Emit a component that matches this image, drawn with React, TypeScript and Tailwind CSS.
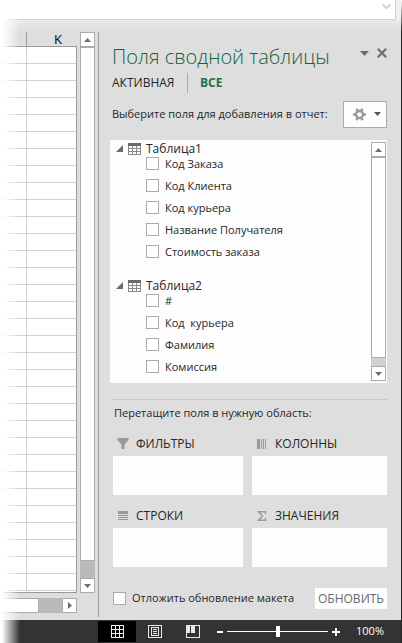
import { useState } from 'react';
import type { ReactNode } from 'react';

interface FieldTable {
  name: string;
  fields: string[];
}

interface Area {
  id: string;
  label: string;
  icon: ReactNode;
}

const tables: FieldTable[] = [
  {
    name: 'Таблица1',
    fields: ['Код Заказа', 'Код Клиента', 'Код курьера', 'Название Получателя', 'Стоимость заказа'],
  },
  {
    name: 'Таблица2',
    fields: ['#', 'Код  курьера', 'Фамилия', 'Комиссия'],
  },
];

const sheetRows = Array.from({ length: 32 }, (_, i) => i);

type Direction = 'up' | 'down' | 'right';

const arrowPaths: Record<Direction, string> = {
  up: 'M0 6 L3.5 2 L7 6 Z',
  down: 'M0 2 L3.5 6 L7 2 Z',
  right: 'M2 0 L6 3.5 L2 7 Z',
};

function Arrow({ direction }: { direction: Direction }) {
  return (
    <svg className="w-[7px] h-[7px]" viewBox="0 0 7 7" fill="#6e6e6e">
      <path d={arrowPaths[direction]} />
    </svg>
  );
}

function ScrollButton({ direction, label }: { direction: Direction; label: string }) {
  return (
    <button
      type="button"
      aria-label={label}
      className="w-[15px] h-[15px] shrink-0 flex items-center justify-center bg-white border border-[#ababab]"
    >
      <Arrow direction={direction} />
    </button>
  );
}

function TableIcon() {
  return (
    <svg className="w-[13px] h-3 shrink-0" viewBox="0 0 13 12" shapeRendering="crispEdges">
      <rect width="13" height="12" fill="#8a8a8a" />
      <rect width="13" height="3" fill="#6a6a6a" />
      <path
        fill="#fdfdfd"
        d="M1 3h3v2H1zM5 3h3v2H5zM9 3h3v2H9zM1 6h3v2H1zM5 6h3v2H5zM9 6h3v2H9zM1 9h3v2H1zM5 9h3v2H5zM9 9h3v2H9z"
      />
    </svg>
  );
}

const areas: Area[] = [
  {
    id: 'filters',
    label: 'ФИЛЬТРЫ',
    icon: (
      <svg className="w-3 h-3" viewBox="0 0 12 12" fill="#999">
        <path d="M0.500 0h11v2L7.500 6.500V11H4.500V6.500L0.500 2z" />
      </svg>
    ),
  },
  {
    id: 'columns',
    label: 'КОЛОННЫ',
    icon: (
      <svg className="w-3 h-3" viewBox="0 0 12 12" fill="#999" shapeRendering="crispEdges">
        <path d="M1 1h3v10H1zM5 1h1v10H5zM7 1h1v10H7zM9 1h1v10H9z" />
      </svg>
    ),
  },
  {
    id: 'rows',
    label: 'СТРОКИ',
    icon: (
      <svg className="w-3 h-3" viewBox="0 0 12 12" fill="#999" shapeRendering="crispEdges">
        <path d="M1 1h10v3H1zM1 5h10v1H1zM1 7h10v1H1zM1 9h10v1H1z" />
      </svg>
    ),
  },
  {
    id: 'values',
    label: 'ЗНАЧЕНИЯ',
    icon: (
      <svg className="w-3 h-3" viewBox="0 0 12 12" fill="none" stroke="#999" strokeWidth="1.500">
        <path d="M9.500 4V1.700H2.500L6.500 6L2.500 10.300H9.500V8" />
      </svg>
    ),
  },
];

function Sheet() {
  return (
    <div className="w-[99px] shrink-0 flex flex-col pt-3 pb-[3px]">
      <div className="flex-1 min-h-0 flex border-r border-[#a0a0a0]">
        <div className="flex-1 min-w-0 flex flex-col">
          <div className="flex-1 min-h-0 flex justify-between pr-[3px]">
            <div className="w-[77px] flex flex-col">
              <table className="w-full table-fixed border-separate border-spacing-0">
                <thead>
                  <tr className="h-[15px]">
                    <th className="w-[27px] p-0 border-r border-b border-[#999]"></th>
                    <th className="p-0 pl-3 border-b border-[#999] text-[13px] leading-[14px] font-normal text-black">
                      K
                    </th>
                  </tr>
                </thead>
                <tbody>
                  {sheetRows.map((row) => (
                    <tr key={row} className="h-[17px] bg-white">
                      <td className="p-0 border-r border-b border-[#d0d0d0]"></td>
                      <td className="p-0 border-b border-b-[#d0d0d0] border-r border-r-[#999]"></td>
                    </tr>
                  ))}
                </tbody>
              </table>
              <div className="h-0.5 shrink-0 bg-white border-b border-r border-[#999]"></div>
            </div>
            <div className="w-[15px] h-[561px] flex flex-col bg-[#bababa]">
              <ScrollButton direction="up" label="Прокрутить вверх" />
              <div className="flex-1 mb-[17px] bg-white border border-[#ababab]"></div>
              <ScrollButton direction="down" label="Прокрутить вниз" />
            </div>
          </div>
          <div className="w-[77px] h-[15px] mb-1 flex bg-[#bababa]">
            <div className="w-[39px] bg-white border border-[#ababab]"></div>
            <div className="flex-1"></div>
            <ScrollButton direction="right" label="Прокрутить вправо" />
          </div>
        </div>
      </div>
    </div>
  );
}

function FieldList() {
  return (
    <div className="mt-3 -ml-0.5 h-[243px] flex bg-[#fdfdfd]">
      <div className="flex-1 min-w-0">
        {tables.map((table) => (
          <section key={table.name} className="h-[137px]">
            <h2 className="h-[17px] pl-1.5 flex items-center text-[12px] leading-4">
              <svg className="w-[7px] h-[7px] mr-[5px]" viewBox="0 0 7 7" fill="#6a6a6a">
                <path d="M7 0V7H0Z" />
              </svg>
              <TableIcon />
              <span className="ml-[5px]">{table.name}</span>
            </h2>
            <ul>
              {table.fields.map((field) => (
                <li key={field} className="h-[22px]">
                  <label className="pl-9 flex items-start gap-1.5 text-[11px] leading-[14px] whitespace-pre">
                    <input
                      type="checkbox"
                      className="appearance-none w-[13px] h-[13px] shrink-0 bg-white border border-[#ababab] checked:bg-[#217346]"
                    />
                    {field}
                  </label>
                </li>
              ))}
            </ul>
          </section>
        ))}
      </div>
      <div className="w-[15px] my-0.5 mr-px flex flex-col bg-[#d0d0d0]">
        <ScrollButton direction="up" label="Прокрутить список вверх" />
        <div className="flex-1 mb-2 bg-white border border-[#ababab]"></div>
        <ScrollButton direction="down" label="Прокрутить список вниз" />
      </div>
    </div>
  );
}

function FieldsPane() {
  return (
    <aside className="flex-1 min-w-0 pt-[23px] pl-[13px] pr-[15px] text-[#262626]">
      <div className="flex items-start justify-between">
        <h1 className="text-[20px] leading-7 font-light text-[#14633a] whitespace-nowrap">
          Поля сводной таблицы
        </h1>
        <div className="pt-[5px] flex items-center gap-2">
          <button type="button" aria-label="Параметры области задач">
            <svg className="w-[9px] h-[5px]" viewBox="0 0 9 5" fill="#6e6e6e">
              <path d="M0 0H9L4.500 5Z" />
            </svg>
          </button>
          <button type="button" aria-label="Закрыть">
            <svg className="w-2.5 h-2.5" viewBox="0 0 10 10" stroke="#6e6e6e" strokeWidth="2.200">
              <path d="M0.800 0.800L9.200 9.200M9.200 0.800L0.800 9.200" />
            </svg>
          </button>
        </div>
      </div>

      <div className="mt-0.5 h-5 flex items-center text-[12px]">
        <button type="button" className="w-[76px] h-5 text-left border-r border-[#ababab]">
          АКТИВНАЯ
        </button>
        <button type="button" className="pl-3 font-bold text-[#217346]">
          ВСЕ
        </button>
      </div>

      <div className="mt-[7px] h-7 flex items-center justify-between">
        <p className="text-[11px] whitespace-nowrap">Выберите поля для добавления в отчет:</p>
        <button
          type="button"
          aria-label="Сервис"
          className="w-11 h-[27px] shrink-0 pl-1 flex items-center justify-center gap-2 bg-[#fdfdfd] border border-[#ababab]"
        >
          <svg className="w-[13px] h-[13px]" viewBox="0 0 13 13">
            <circle cx="6.500" cy="6.500" r="3.500" fill="none" stroke="#9a9a9a" strokeWidth="2.400" />
            <path
              d="M3.400 0.900L4.700 3M9.600 0.900L8.300 3M3.400 12.100L4.700 10M9.600 12.100L8.300 10M0 6.500H2.500M10.500 6.500H13"
              stroke="#9a9a9a"
              strokeWidth="2.600"
            />
          </svg>
          <svg className="w-[7px] h-1" viewBox="0 0 7 4" fill="#555">
            <path d="M0 0H7L3.500 4Z" />
          </svg>
        </button>
      </div>

      <FieldList />

      <div className="mt-4 border-b border-dotted border-[#b4b4b4]"></div>

      <div className="pl-px">
        <p className="mt-1 pl-px text-[11px] leading-[18px]">Перетащите поля в нужную область:</p>

        <div className="mt-3 grid grid-cols-[130fr_135fr] gap-x-[9px]">
          {areas.map((area) => (
            <section key={area.id} className="h-[72px]">
              <h2 className="mb-0.5 h-5 pl-1 flex items-center gap-[7px] text-[12px]">
                {area.icon}
                {area.label}
              </h2>
              <div className="h-[39px] bg-[#fdfdfd]"></div>
            </section>
          ))}
        </div>

        <div className="mt-2.5 h-[21px] flex items-center justify-between">
          <label className="flex items-center gap-1.5 text-[11px] whitespace-nowrap">
            <input
              type="checkbox"
              className="appearance-none w-[13px] h-[13px] shrink-0 bg-[#fdfdfd] border border-[#ababab] checked:bg-[#217346]"
            />
            Отложить обновление макета
          </label>
          <button type="button" className="w-[72px] h-[21px] bg-[#fdfdfd] text-[12px] text-[#6a6a6a]">
            ОБНОВИТЬ
          </button>
        </div>
      </div>
    </aside>
  );
}

function StatusBar() {
  const [zoom, setZoom] = useState(100);

  return (
    <footer className="h-[23px] shrink-0 pl-[98px] pr-[18px] flex items-center bg-[#333] text-white">
      <button type="button" aria-label="Обычный" className="w-[38px] h-[21px] flex items-center justify-center bg-black">
        <svg className="w-[13px] h-[13px]" viewBox="0 0 13 13" shapeRendering="crispEdges">
          <path
            d="M0 .5H13M0 4.500H13M0 8.500H13M0 12.500H13M.5 0V13M4.500 0V13M8.500 0V13M12.500 0V13"
            stroke="#f0f0f0"
          />
        </svg>
      </button>
      <button type="button" aria-label="Разметка страницы" className="w-[38px] h-[21px] flex items-center justify-center">
        <svg className="w-3.5 h-[13px]" viewBox="0 0 14 13" fill="none" stroke="#e8e8e8" shapeRendering="crispEdges">
          <path d="M.5 .5H13.500V12.500H.5ZM3.500 2.500H10.500V10.500H3.500ZM5 4.500H9M5 6.500H9M5 8.500H9" />
        </svg>
      </button>
      <button type="button" aria-label="Страничный режим" className="w-[38px] h-[21px] flex items-center justify-center">
        <svg className="w-3.5 h-[13px]" viewBox="0 0 14 13" shapeRendering="crispEdges">
          <path d="M.5 .5H13.500V12.500H.5Z" fill="none" stroke="#e8e8e8" />
          <path d="M1 1H4V8H1ZM5 1H9V8H5Z" fill="#e8e8e8" />
        </svg>
      </button>
      <div className="flex-1 pl-[5px] flex items-center gap-1">
        <button type="button" aria-label="Уменьшить" onClick={() => setZoom(Math.max(10, zoom - 10))}>
          <svg className="w-1.5 h-2" viewBox="0 0 6 8" fill="#fff">
            <path d="M0 3H6V5H0Z" />
          </svg>
        </button>
        <input
          type="range"
          aria-label="Масштаб"
          min={10}
          max={190}
          value={zoom}
          onChange={(e) => setZoom(Number(e.target.value))}
          className="w-0 flex-1 h-2.5 appearance-none bg-transparent [&::-webkit-slider-runnable-track]:h-px [&::-webkit-slider-runnable-track]:bg-white [&::-webkit-slider-thumb]:appearance-none [&::-webkit-slider-thumb]:w-1 [&::-webkit-slider-thumb]:h-[11px] [&::-webkit-slider-thumb]:-mt-[5px] [&::-webkit-slider-thumb]:bg-white"
        />
        <button type="button" aria-label="Увеличить" onClick={() => setZoom(Math.min(190, zoom + 10))}>
          <svg className="w-2 h-2" viewBox="0 0 8 8" fill="#fff">
            <path d="M3 0H5V3H8V5H5V8H3V5H0V3H3Z" />
          </svg>
        </button>
      </div>
      <span className="ml-4 text-[11px]">{zoom}%</span>
    </footer>
  );
}

export default function App() {
  return (
    <div className="relative h-screen flex flex-col bg-white font-['Open_Sans','Noto_Sans',sans-serif]">
      <div className="h-5 shrink-0 pr-1.5 bg-[#f0f0f0]">
        <div className="h-5 flex items-start justify-end pt-1 pr-1 bg-white border-b border-r border-[#d0d0d0]">
          <button type="button" aria-label="Развернуть строку формул">
            <svg className="w-[9px] h-[5px]" viewBox="0 0 9 5" fill="none" stroke="#d0d0d0" strokeWidth="2">
              <path d="M.5 .5L4.500 4L8.500 .5" />
            </svg>
          </button>
        </div>
      </div>
      <main className="flex-1 min-h-0 flex bg-[#dedede] bg-linear-to-b from-[#ebebeb] from-0% to-[#dedede] to-2%">
        <Sheet />
        <FieldsPane />
      </main>
      <StatusBar />
      {/* window edge and the fade-out on the left */}
      <div className="absolute right-0 inset-y-0 w-px bg-linear-to-b from-white to-[#262626] to-5% pointer-events-none"></div>
      <div className="absolute left-0 inset-y-0 w-5 bg-linear-to-r from-white from-10% to-transparent pointer-events-none"></div>
    </div>
  );
}
